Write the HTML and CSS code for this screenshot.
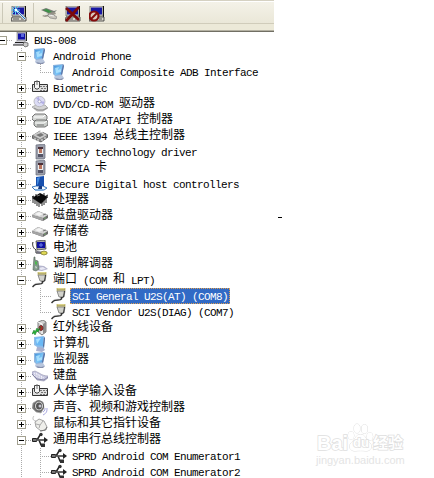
FILE: index.html
```html
<!DOCTYPE html>
<html lang="zh-CN">
<head>
<meta charset="utf-8">
<title>设备管理器</title>
<link rel="stylesheet" href="styles.css">
</head>
<body>
<svg class="defs" width="0" height="0" aria-hidden="true">
  <defs>
    <linearGradient id="blue" x1="0" y1="0" x2="1" y2="1"><stop offset="0" stop-color="#3f8fd8"/><stop offset=".6" stop-color="#7cc8fa"/><stop offset="1" stop-color="#4a92dc"/></linearGradient>
    <symbol id="desktop" viewBox="0 0 16 16"><path d="M4 0h9v9H4z" fill="#b9b9c8" stroke="#777" stroke-width=".6"/><path d="M5 1.500h7v6H5z" fill="#1010a8"/><path d="M8 2h3v3H8z" fill="#5865dc"/><path d="M13 0h1v9h-1z" fill="#222"/><path d="M3 9h10l1 4H0z" fill="#d4d4dc"/><path d="M2 10.500h10M0 13h11" stroke="#222"/><path d="M11 10l4 1v3l-3 1-2-2z" fill="#ccc" stroke="#555" stroke-width=".7"/></symbol>
    <symbol id="monitor" viewBox="0 0 16 16"><path d="M4 11h7l2 3-3 2H5l-2-2z" fill="#b9c6dd"/><path d="M4 14l5 1 4-1-2 2H6z" fill="#8790ac"/><path d="M2 1l10-1 1 2-2 9-7 1-2-2z" fill="#8eb5df"/><path d="M3 2l8-1-1 9-6 1z" fill="url(#blue)"/><path d="M4 4l4-1-1 3 3-1v3l-5 1z" fill="#b4e6ff" opacity=".8"/><path d="M12 0l1 2-2 9-1-1z" fill="#5873a5"/></symbol>
    <symbol id="computer" viewBox="0 0 16 16"><path d="M5 11h6l2 3-3 2-6-1z" fill="#a9b0cf"/><path d="M2 1l10-1 1 2-1 10-7-1-3-2z" fill="#8fbce8"/><path d="M3 2l8-1v9l-7-1z" fill="#69b8f5"/><path d="M4 3l5-1-4 6z" fill="#a8e0ff"/><path d="M12 1l1 1-1 10-1-2z" fill="#526b99"/></symbol>
    <symbol id="hid" viewBox="0 0 16 16"><path d="M.5 4.500h15v7H.5z" fill="#dedede" stroke="#333"/><path d="M8 6.500h7M9 8.500h6M8 10.500h7" stroke="#777" stroke-dasharray="2 1"/><path d="M2.500 1.500h5v6L6 9H4L2.500 7.500z" fill="#f5f5f5" stroke="#444"/><path d="M5 0v5" stroke="#777"/></symbol>
    <symbol id="cd" viewBox="0 0 16 16"><path d="M0 11l4-2h9l3 3-5 3H5z" fill="#d4d4d4" stroke="#888" stroke-width=".6"/><path d="M2 12l4 2h5l4-2" fill="none" stroke="#8b8b8b"/><ellipse cx="7.500" cy="5.500" rx="5.500" ry="5.200" fill="#dcdcf5" stroke="#aaa" stroke-width=".7"/><path d="M7.500 5.500L4 2l3-1zM7.500 5.500l4 3 1-3z" fill="#b1aee5"/><circle cx="7.500" cy="5.500" r="1.500" fill="#fff" stroke="#8181ae" stroke-width=".6"/></symbol>
    <symbol id="ide" viewBox="0 0 16 16"><path d="M3 2h10l2 2v3l-2 2H2L0 7V5z" fill="#d5d7d5" stroke="#555" stroke-width=".8"/><path d="M2 5h9l2-2" fill="none" stroke="#fff"/><path d="M4 8h9l3 1v4l-3 2H4l-2-2v-3z" fill="#c8ccc8" stroke="#555" stroke-width=".8"/><path d="M3 11h9l3-2" fill="none" stroke="#fff"/><path d="M5 13h7" stroke="#777"/></symbol>
    <symbol id="ieee" viewBox="0 0 16 16"><path d="M0 8l8-5 8 4v2l-7 5-9-4z" fill="#888" stroke="#333" stroke-width=".6"/><path d="M1 7l7-4 7 4-7 4z" fill="#ccc"/><path d="M4 7l5-2 3 2-4 2z" fill="#777"/><path d="M3 10v2M6 11v3M10 11v2M13 9v2" stroke="#eee"/><path d="M8 3l3 1" stroke="#fff"/></symbol>
    <symbol id="card" viewBox="0 0 16 16"><path d="M4 1l8-1 1 1v13l-1 1H4z" fill="#9a9daa" stroke="#676d7c" stroke-width=".7"/><path d="M6 3h5v8H6z" fill="#eee"/><path d="M6 3h5v2H6z" fill="#4a3038"/><path d="M7 5h3v4H7z" fill="#b8735d"/><path d="M6 10h5v3H6z" fill="#545567"/></symbol>
    <symbol id="sd" viewBox="0 0 16 16"><path d="M0 11l4-1h7l4 2-3 2H3z" fill="#f4faff" stroke="#3c78bd"/><path d="M4 1l8-1v10H4z" fill="#164fae"/><path d="M5 2l3-1-2 7-1 1z" fill="#4189df"/><path d="M7 10h3v3H6z" fill="#163880"/><path d="M3 14h8" stroke="#6ca6dd"/></symbol>
    <symbol id="cpu" viewBox="0 0 16 16"><path d="M0 6l8-5 8 4-7 7z" fill="#090909"/><path d="M1 6v5M3 7v5M5 9v5M7 10v5M10 10v4M12 8v5M14 6v5M1 4v2M15 4v2" stroke="#222"/><path d="M0 5l2-1M14 4l2-1M3 3h2M11 2h2" stroke="#222"/><path d="M5 4l3-1" stroke="#777"/></symbol>
    <symbol id="disk" viewBox="0 0 16 16"><path d="M0 7l6-4 10 4v3l-5 3-11-4z" fill="#6c6c6c"/><path d="M0 7l6-4 10 4-5 3z" fill="#d4d4d4"/><path d="M0 7l11 3v3L0 9z" fill="#a4a4a4"/><path d="M3 6l4-2 4 2-4 2z" fill="#f4f4f4"/><path d="M11 7l3-1" stroke="#777"/><circle cx="13" cy="10" r=".7" fill="#7cc273"/></symbol>
    <symbol id="battery" viewBox="0 0 16 16"><path d="M1 2c-1 3 0 6 3 8v3h6" fill="none" stroke="#222"/><path d="M4 1l9-1 1 9-9 1z" fill="#aaa" stroke="#333" stroke-width=".7"/><path d="M5 2h8v6H5z" fill="#1111a0"/><path d="M7 5h4M9 3v4" stroke="#6c80ee"/><path d="M5 11l7 1-1 2-7-1z" fill="#70707e"/><path d="M9 12l3-1 3 1v2l-3 1-3-1z" fill="#ded855" stroke="#777022" stroke-width=".7"/></symbol>
    <symbol id="modem" viewBox="0 0 16 16"><path d="M3 9l9 1 4 3-6 2-8-1z" fill="#b5b5cd"/><path d="M6 12l5-1 3 2-5 1z" fill="#e8e8f4"/><path d="M2 1h1v3l3 1 1 8-3 2-3-1z" fill="#81988a" stroke="#57645a" stroke-width=".6"/><path d="M3 5l2 1v3l-2-1z" fill="#4eb94e"/><path d="M3 10l2 1-1 2z" fill="#dce5dc"/></symbol>
    <symbol id="port" viewBox="0 0 16 16"><path d="M6 0h8v3H6z" fill="#f0e9a8" stroke="#b8ae58" stroke-width=".7"/><path d="M7 1v1M9 1v1M11 1v1M13 1v1" stroke="#807835"/><path d="M6 3h8l-1 6H8z" fill="#d2d2cc" stroke="#777" stroke-width=".8"/><path d="M13.500 3l-1 6-3 1" fill="none" stroke="#333"/><path d="M10.500 9v2c-1 2-6 0-8 2l-2 2" fill="none" stroke="#333" stroke-width="1.500"/><path d="M9 10c-1 1-5 1-7 2" fill="none" stroke="#ddd" stroke-width=".5"/></symbol>
    <symbol id="infrared" viewBox="0 0 16 16"><path d="M6 2l5-2 3 2v10l-4 3-4-3z" fill="#d0d0d0" stroke="#666" stroke-width=".8"/><path d="M6 2l4 2v10" fill="none" stroke="#fff"/><path d="M11 4l3-2v10l-3 2z" fill="#8d8d8d"/><ellipse cx="9" cy="8" rx="2" ry="2.500" fill="#b42727" stroke="#64302c"/><path d="M0 14l2-4 1 2 2-4 1 2 3-3-3 5-1-1-2 4-1-2z" fill="#22b631" stroke="#137020" stroke-width=".5"/></symbol>
    <symbol id="keyboard" viewBox="0 0 16 16"><path d="M0 4l3-1 4 2c3 2 6 3 9 3v2l-4 3-7-1-5-6z" fill="#c6c6df" stroke="#9393ad" stroke-width=".6"/><path d="M2 5l9 5M4 5l8 5M2 7l8 4" stroke="#fff" stroke-dasharray="1 1"/><path d="M0 6l5 5 7 1 4-3" fill="none" stroke="#8686a4"/></symbol>
    <symbol id="sound" viewBox="0 0 16 16"><path d="M1 3l5-3 5 2 1 6-3 5-5-1-4-4z" fill="#777" stroke="#aaa" stroke-width=".7"/><ellipse cx="7" cy="6" rx="4.500" ry="5" fill="#dadada" stroke="#555"/><ellipse cx="7" cy="6" rx="3" ry="3.500" fill="#555"/><circle cx="8" cy="6" r="1.500" fill="#c8c8d2"/><path d="M11 12c2-1 2-3 2-4M11 15c4-2 4-4 4-7" fill="none" stroke="#a8a8df"/></symbol>
    <symbol id="mouse" viewBox="0 0 16 16"><path d="M4 5C1 5 0 2 2 0" fill="none" stroke="#bbb"/><path d="M3 6l4-3 5 2 3 6-1 3-5 1-5-4z" fill="#efefeb" stroke="#999" stroke-width=".9"/><path d="M4 8l4 1 3-4M8 9l-1 3" fill="none" stroke="#aaa"/><path d="M8 15l5-1 2-3" fill="none" stroke="#777"/></symbol>
    <symbol id="usb" viewBox="0 0 16 16"><path d="M1 8h13M5 8l3-5h2M7 8l2 5h2" fill="none" stroke="#222" stroke-width="1.500"/><path d="M.5 6.500h4v3h-4z" fill="#777" stroke="#222"/><path d="M12 5l4 3-4 3z" fill="#222"/><circle cx="9" cy="2.500" r="1.700" fill="#333"/><path d="M9 11.500h4V15H9z" fill="#333"/><path d="M4 8h8" stroke="#777"/></symbol>
    <symbol id="screen" viewBox="0 0 16 16"><path d="M1 0h13v10H1z" fill="#d8d5ca" stroke="#555" stroke-width=".7"/><path d="M2 1.500h11v7H2z" fill="#1717a2"/><path d="M14 0h1v11h-1z" fill="#111"/><path d="M1 11h14v4H0z" fill="#d8d5ca" stroke="#333" stroke-width=".8"/><path d="M2 13h6M10 13h3" stroke="#555"/></symbol>
    <symbol id="scan" viewBox="0 0 16 16"><use href="#screen"/><path d="M5 4l9 9" stroke="#d8f4ff" stroke-width="2"/><path d="M7 6l7 7" stroke="#2b72b9"/><path d="M0 4h9M4.500 0v9M1 1l6 6M8 0L1 8" stroke="#61cef0"/><path d="M4 3h2v2H4z" fill="#fff"/></symbol>
    <symbol id="update" viewBox="0 0 16 16"><path d="M0 4l5-2 8 3 3-1-3 3-4 1z" fill="#777d75"/><path d="M2 4l4-1 5 3-3 1z" fill="#3d9147"/><path d="M1 10l6-3 7-1 1 2-6 2-5 1z" fill="#9b968a"/><path d="M6 9l3 3 6 1 1-2-5-3z" fill="#c9c5bb" stroke="#777" stroke-width=".6"/><path d="M8 9l5 1M3 9l4-1" stroke="#eee"/></symbol>
    <symbol id="remove" viewBox="0 0 16 16"><use href="#screen"/><path d="M1 2l13 12M14 1L1 15" stroke="#7b0909" stroke-width="2.600"/></symbol>
    <symbol id="disable" viewBox="0 0 16 16"><use href="#screen"/><circle cx="5" cy="10" r="4.500" fill="#d9c9bd" stroke="#850b0b" stroke-width="2.200"/><path d="M2 13l6-6" stroke="#850b0b" stroke-width="2"/></symbol>
  </defs>
</svg>

<header class="toolbar">
  <div class="tools">
    <span class="sep"></span>
    <svg class="icon scan"><use href="#scan"/></svg>
    <span class="sep"></span>
    <svg class="icon"><use href="#update"/></svg>
    <svg class="icon"><use href="#remove"/></svg>
    <svg class="icon"><use href="#disable"/></svg>
  </div>
</header>

<main class="tree">
  <div class="row root"><i class="box"></i><i class="dots"></i><svg class="icon"><use href="#desktop"/></svg><span class="label"><b>BUS-008</b></span></div>
  <div class="branch">
    <div class="row"><i class="box"></i><i class="dots"></i><svg class="icon"><use href="#monitor"/></svg><span class="label"><b>Android Phone</b></span></div>
    <div class="leaves">
      <div class="row"><i class="dots"></i><svg class="icon"><use href="#monitor"/></svg><span class="label"><b>Android Composite ADB Interface</b></span></div>
    </div>
    <div class="row"><i class="box plus"></i><i class="dots"></i><svg class="icon"><use href="#hid"/></svg><span class="label"><b>Biometric</b></span></div>
    <div class="row"><i class="box plus"></i><i class="dots"></i><svg class="icon"><use href="#cd"/></svg><span class="label"><b>DVD/CD-ROM </b>驱动器</span></div>
    <div class="row"><i class="box plus"></i><i class="dots"></i><svg class="icon"><use href="#ide"/></svg><span class="label"><b>IDE ATA/ATAPI </b>控制器</span></div>
    <div class="row"><i class="box plus"></i><i class="dots"></i><svg class="icon"><use href="#ieee"/></svg><span class="label"><b>IEEE 1394 </b>总线主控制器</span></div>
    <div class="row"><i class="box plus"></i><i class="dots"></i><svg class="icon"><use href="#card"/></svg><span class="label"><b>Memory technology driver</b></span></div>
    <div class="row"><i class="box plus"></i><i class="dots"></i><svg class="icon"><use href="#card"/></svg><span class="label"><b>PCMCIA </b>卡</span></div>
    <div class="row"><i class="box plus"></i><i class="dots"></i><svg class="icon"><use href="#sd"/></svg><span class="label"><b>Secure Digital host controllers</b></span></div>
    <div class="row"><i class="box plus"></i><i class="dots"></i><svg class="icon"><use href="#cpu"/></svg><span class="label">处理器</span></div>
    <div class="row"><i class="box plus"></i><i class="dots"></i><svg class="icon"><use href="#disk"/></svg><span class="label">磁盘驱动器</span></div>
    <div class="row"><i class="box plus"></i><i class="dots"></i><svg class="icon"><use href="#disk"/></svg><span class="label">存储卷</span></div>
    <div class="row"><i class="box plus"></i><i class="dots"></i><svg class="icon"><use href="#battery"/></svg><span class="label">电池</span></div>
    <div class="row"><i class="box plus"></i><i class="dots"></i><svg class="icon"><use href="#modem"/></svg><span class="label">调制解调器</span></div>
    <div class="row"><i class="box"></i><i class="dots"></i><svg class="icon"><use href="#port"/></svg><span class="label">端口<b> (COM </b>和<b> LPT)</b></span></div>
    <div class="leaves">
      <div class="row"><i class="dots"></i><svg class="icon"><use href="#port"/></svg><span class="label selected"><b>SCI General U2S(AT) (COM8)</b></span></div>
      <div class="row"><i class="dots"></i><svg class="icon"><use href="#port"/></svg><span class="label"><b>SCI Vendor U2S(DIAG) (COM7)</b></span></div>
    </div>
    <div class="row"><i class="box plus"></i><i class="dots"></i><svg class="icon"><use href="#infrared"/></svg><span class="label">红外线设备</span></div>
    <div class="row"><i class="box plus"></i><i class="dots"></i><svg class="icon"><use href="#computer"/></svg><span class="label">计算机</span></div>
    <div class="row"><i class="box plus"></i><i class="dots"></i><svg class="icon"><use href="#monitor"/></svg><span class="label">监视器</span></div>
    <div class="row"><i class="box plus"></i><i class="dots"></i><svg class="icon"><use href="#keyboard"/></svg><span class="label">键盘</span></div>
    <div class="row"><i class="box plus"></i><i class="dots"></i><svg class="icon"><use href="#hid"/></svg><span class="label">人体学输入设备</span></div>
    <div class="row"><i class="box plus"></i><i class="dots"></i><svg class="icon"><use href="#sound"/></svg><span class="label">声音、视频和游戏控制器</span></div>
    <div class="row"><i class="box plus"></i><i class="dots"></i><svg class="icon"><use href="#mouse"/></svg><span class="label">鼠标和其它指针设备</span></div>
    <div class="row"><i class="box"></i><i class="dots"></i><svg class="icon"><use href="#usb"/></svg><span class="label">通用串行总线控制器</span></div>
    <div class="leaves open">
      <div class="row"><i class="dots"></i><svg class="icon"><use href="#usb"/></svg><span class="label"><b>SPRD Android COM Enumerator1</b></span></div>
      <div class="row"><i class="dots"></i><svg class="icon"><use href="#usb"/></svg><span class="label"><b>SPRD Android COM Enumerator2</b></span></div>
    </div>
  </div>
</main>

<i class="dash"></i>
<div class="watermark">
  <div class="brand">
    <span class="bai">Bai</span>
    <span class="paw">
      <svg viewBox="0 0 27 30" width="27" height="30"><g fill="#fff" stroke="#dedede"><path d="M13.500 11.500c5 0 5 5 9 8 4 4 1 9-4 8.500-3-.5-7-.5-10 0-5 .5-8-4.500-4-8.500 4-3 4-8 9-8z"/><ellipse cx="4" cy="12.500" rx="3" ry="4"/><ellipse cx="10" cy="5.500" rx="3" ry="4.500"/><ellipse cx="17.500" cy="6" rx="3" ry="4.500"/><ellipse cx="22.800" cy="13.500" rx="3" ry="4"/></g></svg>
      <span class="du">du</span>
    </span>
    <span class="jingyan">经验</span>
  </div>
  <div class="url">jingyan.baidu.com</div>
</div>
</body>
</html>
```
FILE: styles.css
```css
body {
  margin: 0;
  height: 478px;
  overflow: hidden;
  position: relative;
  background: #fff;
  color: #000;
  font: 12px/16px "Liberation Mono", "Noto Sans CJK SC", monospace;
}

.defs { position: absolute; }

.icon {
  display: block;
  flex: none;
  width: 16px;
  height: 16px;
}

/* Toolbar */
.toolbar {
  box-sizing: border-box;
  width: 274px;
  height: 32px;
  background: #ece9d8;
  border-top: 1px solid #d5d1c2;
  border-bottom: 1px solid #716f64;
  box-shadow: inset 0 -1px #b4b1a2;
}

.tools {
  box-sizing: border-box;
  display: flex;
  align-items: center;
  gap: 8px;
  height: 23px;
  padding: 3px 0 0 2px;
  background: linear-gradient(#f4f2e8, #eae7d8);
  border-top: 1px solid #fff;
  border-bottom: 1px solid #d0ccba;
}

.sep {
  width: 1px;
  height: 20px;
  margin-top: -2px;
  background: #cbc8b8;
}

.scan { margin-right: -2px; }

.tools .sep + .icon:not(.scan) { margin-left: -1px; }

/* Device tree */
.row {
  display: flex;
  height: 16px;
}

.root { margin-left: -2px; }

.branch {
  padding-left: 17px;
  background: repeating-linear-gradient(#aaa 0 1px, transparent 1px 2px) 21px 0 / 1px 100% no-repeat;
}

.leaves {
  margin-left: 23px;
  background: repeating-linear-gradient(#aaa 0 1px, transparent 1px 2px) 0 0 / 1px calc(100% - 7px) no-repeat;
}

.leaves.open { background-size: 1px 100%; }

.box {
  box-sizing: border-box;
  flex: none;
  width: 9px;
  height: 9px;
  margin-top: 4px;
  border: 1px solid #a2a090;
  background: linear-gradient(#000, #000) center / 5px 1px no-repeat #fff;
}

.plus {
  background:
    linear-gradient(#000, #000) center / 5px 1px no-repeat,
    linear-gradient(#000, #000) center / 1px 5px no-repeat,
    #fff;
}

.dots {
  flex: none;
  width: 6px;
  height: 1px;
  margin-top: 8px;
  background: repeating-linear-gradient(90deg, #aaa 0 1px, transparent 1px 2px);
}

.leaves .dots { width: 11px; }

.label {
  box-sizing: border-box;
  height: 16px;
  margin-left: 3px;
  padding: 0 2px;
  white-space: pre;
}

.label b {
  position: relative;
  top: 1px;
  font-size: 11px;
  font-weight: normal;
  letter-spacing: -0.6px;
}

.selected {
  width: 160px;
  padding: 0 1px;
  border: 1px dotted #e0a050;
  background: #316ac5;
  color: #fff;
  line-height: 14px;
}

.dash {
  position: absolute;
  left: 278px;
  top: 217px;
  width: 4px;
  height: 1px;
  background: #000;
}

/* Watermark */
.watermark {
  position: absolute;
  left: 317px;
  top: 423px;
  width: 92px;
  color: #fff;
  font-family: "Liberation Sans", "Noto Sans CJK SC", sans-serif;
  -webkit-text-stroke: 1.5px #dedede;
  paint-order: stroke fill;
}

.brand {
  display: flex;
  height: 30px;
}

.bai {
  width: 30px;
  font-size: 20px;
  font-weight: bold;
  line-height: 40px;
}

.paw {
  position: relative;
  width: 26px;
}

.du {
  position: absolute;
  left: 6px;
  top: 13px;
  font-size: 13px;
  font-weight: bold;
  line-height: 14px;
}

.jingyan {
  font-size: 15px;
  font-weight: bold;
  line-height: 40px;
}

.url {
  margin-left: -1px;
  color: #e4e4e4;
  font-size: 11px;
  line-height: 14px;
  -webkit-text-stroke: 0;
}
```
